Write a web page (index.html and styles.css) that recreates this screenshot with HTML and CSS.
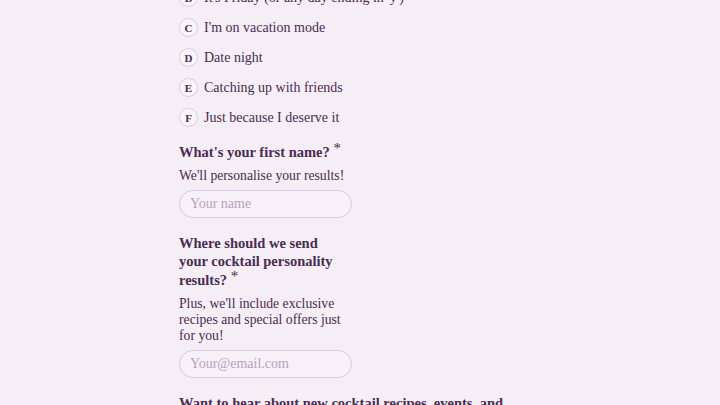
FILE: index.html
```html
<!DOCTYPE html>
<html lang="en">
<head>
<meta charset="utf-8">
<title>Cocktail personality quiz</title>
<link rel="stylesheet" href="styles.css">
</head>
<body>
<main class="quiz">
  <ul class="options">
    <li class="option"><span class="key">B</span><span class="label">It's Friday (or any day ending in 'y')</span></li>
    <li class="option"><span class="key">C</span><span class="label">I'm on vacation mode</span></li>
    <li class="option"><span class="key">D</span><span class="label">Date night</span></li>
    <li class="option"><span class="key">E</span><span class="label">Catching up with friends</span></li>
    <li class="option"><span class="key">F</span><span class="label">Just because I deserve it</span></li>
  </ul>

  <section class="field">
    <h2 class="question">What's your first name? <span class="req">*</span></h2>
    <p class="hint">We'll personalise your results!</p>
    <input class="text-input" type="text" placeholder="Your name">
  </section>

  <section class="field">
    <h2 class="question narrow">Where should we send your cocktail personality results? <span class="req">*</span></h2>
    <p class="hint narrow">Plus, we'll include exclusive recipes and special offers just for you!</p>
    <input class="text-input" type="email" placeholder="Your@email.com">
  </section>

  <section class="field">
    <h2 class="question wide">Want to hear about new cocktail recipes, events, and special offers?</h2>
  </section>
</main>
</body>
</html>
```
FILE: styles.css
```css
html, body {
  margin: 0;
  padding: 0;
  background: #f5eef7;
}
body {
  font-family: "Liberation Serif", "Times New Roman", serif;
  color: #4a2c4f;
  overflow: hidden;
}
.quiz {
  margin: -12px 0 0 179px;
  width: 360px;
  display: flex;
  flex-direction: column;
}
.options {
  list-style: none;
  margin: 0;
  padding: 0;
  display: flex;
  flex-direction: column;
  gap: 11px;
}
.option {
  display: flex;
  align-items: center;
  gap: 6px;
  height: 19px;
}
.key {
  box-sizing: border-box;
  width: 19px;
  height: 19px;
  border-radius: 50%;
  border: 1px solid #ddcce3;
  background: #f9f4fa;
  display: flex;
  align-items: center;
  justify-content: center;
  font-size: 11px;
  font-weight: 700;
  color: #4a2c4f;
}
.label {
  font-size: 14px;
  white-space: nowrap;
}
.field {
  margin-top: 16px;
  display: flex;
  flex-direction: column;
  align-items: flex-start;
}
.question {
  margin: 0;
  font-size: 14.5px;
  line-height: 18.7px;
  font-weight: 700;
  color: #4a2c4f;
}
.req {
  font-weight: 400;
  font-size: 15px;
  position: relative;
  top: -4px;
}
.hint {
  margin: 6px 0 0;
  font-size: 13.7px;
  line-height: 16px;
  color: #4a2c4f;
}
.narrow {
  width: 170px;
}
.wide {
  width: 340px;
}
.text-input {
  box-sizing: border-box;
  margin-top: 6px;
  width: 173px;
  height: 28px;
  border: 1px solid #dcc8e3;
  border-radius: 14px;
  background: #f7f0f8;
  padding: 0 10px;
  font-family: inherit;
  font-size: 14px;
  color: #4a2c4f;
  outline: none;
}
.text-input::placeholder {
  color: #b8a2bd;
}
```
